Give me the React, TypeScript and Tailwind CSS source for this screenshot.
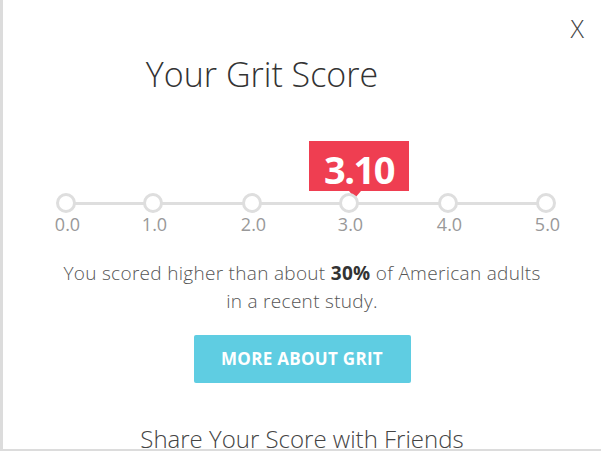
const ticks = [
  { label: '0.0', x: 63 },
  { label: '1.0', x: 150 },
  { label: '2.0', x: 249 },
  { label: '3.0', x: 346 },
  { label: '4.0', x: 445 },
  { label: '5.0', x: 543 },
];

function ScoreTrack() {
  return (
    <div className="relative h-[100px] w-full">
      {/* score flag */}
      <div className="absolute left-[306px] top-[11px] flex h-[50px] w-[100px] items-end justify-center bg-[#ef3e51] pb-[3px]">
        <span className="text-[38px] font-bold leading-none tracking-[-1.5px] text-white">3.10</span>
        <div className="absolute left-[40px] top-[50px] h-0 w-0 border-l-[6px] border-r-[6px] border-t-[7px] border-l-transparent border-r-transparent border-t-[#ef3e51]" />
      </div>
      <div className="absolute left-[63px] top-[72px] h-[3px] w-[480px] bg-[#dedede]" />
      {ticks.map((t) => (
        <div key={t.label} className="absolute top-[63px] flex w-[40px] flex-col items-center" style={{ left: t.x - 20 }}>
          <div className="h-[20px] w-[20px] rounded-full border-[3px] border-[#dedede] bg-white" />
          <span className="ml-[3px] mt-[1px] text-[18px] leading-[20px] text-[#999]">{t.label}</span>
        </div>
      ))}
    </div>
  );
}

export default function App() {
  return (
    <div className="flex h-[451px] w-[601px] bg-[#dcdcdc] font-['Open_Sans',sans-serif]">
      <div className="relative ml-[3px] flex h-[449px] flex-1 flex-col items-center overflow-hidden bg-white">
        <button className="absolute right-[17px] top-[16px] text-[25px] font-light leading-none text-[#444]">X</button>
        <h1 className="mr-[80px] mt-[50px] shrink-0 text-[34px] font-light leading-[48px] text-[#333]">Your Grit Score</h1>
        <div className="mt-[32px] w-full shrink-0">
          <ScoreTrack />
        </div>
        <p className="mt-[29px] shrink-0 text-center text-[19px] font-light leading-[28px] tracking-[0.3px] text-[#555]">
          You scored higher than about <b className="font-bold text-[#333]">30%</b> of American adults
          <br />
          in a recent study.
        </p>
        <button className="mt-[20px] flex h-[48px] w-[217px] shrink-0 items-center justify-center rounded-[2px] bg-[#5fcde2] text-[17px] font-bold tracking-[0.3px] text-white">
          MORE ABOUT GRIT
        </button>
        <h2 className="mt-[41px] shrink-0 text-[24px] font-light leading-[30px] text-[#444]">Share Your Score with Friends</h2>
      </div>
    </div>
  );
}
